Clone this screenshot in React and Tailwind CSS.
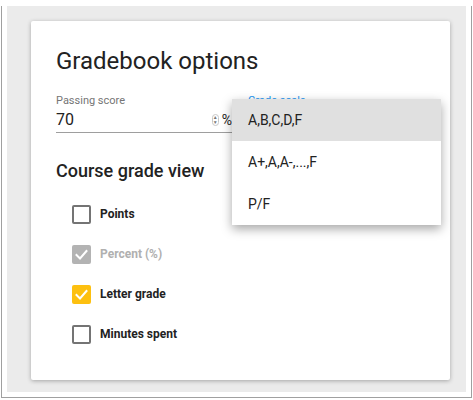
import { useState } from "react"

const font = { fontFamily: "Roboto, 'Liberation Sans', sans-serif" }

const Check = () => (
	<svg viewBox="0 0 19 19" className="w-[19px] h-[19px]">
		<polyline
			points="4.5,10 8,13.5 14.5,6"
			fill="none"
			stroke="white"
			strokeWidth="2"
			strokeLinecap="square"
		/>
	</svg>
)

const Option = ({ label, state }) => {
	let box = "border-2 border-[#747474] bg-white"
	if (state === "disabled") box = "bg-[#b3b3b3]"
	if (state === "checked") box = "bg-[#fdc010]"
	return (
		<div className="flex items-center h-[40px] gap-[9px]">
			<div className={`w-[19px] h-[19px] rounded-[2px] ${box}`}>
				{state !== "off" && <Check />}
			</div>
			<span
				className={`text-[12px] font-bold ${
					state === "disabled" ? "text-[#b0b0b0]" : "text-[#222]"
				}`}
			>
				{label}
			</span>
		</div>
	)
}

const App = () => {
	const [score] = useState("70")
	const scales = ["A,B,C,D,F", "A+,A,A-,...,F", "P/F"]

	return (
		<div className="w-[473px] h-[400px] bg-white pt-[6px] pl-[1px] pr-[1px]" style={font}>
			<div className="h-[392px] border-l border-r border-b border-[#a0a0a0] px-[5px] pb-[5px]">
				<div className="h-[386px] bg-[#ebebeb] pt-[15px] pl-[24px]">
					<div className="relative w-[419px] h-[359px] bg-white rounded-[2px] shadow-[0_1px_4px_rgba(0,0,0,0.3)] pt-[26px] px-[25px]">
						<h1 className="text-[24px] leading-[28px] text-[#222]">Gradebook options</h1>

						<div className="flex gap-[16px] mt-[19px]">
							<div className="w-[176px]">
								<div className="text-[11px] leading-[13px] text-[#757575]">Passing score</div>
								<div className="flex items-center h-[20px] mt-[3px] mb-[2px]">
									<span className="flex-1 text-[16px] text-[#222]">{score}</span>
									<span className="flex flex-col items-center justify-center w-[7px] h-[12px] border border-[#c8c8c8] rounded-full mr-[3px]">
										<span className="text-[5px] leading-[5px] text-[#777]">▲</span>
										<span className="text-[5px] leading-[5px] text-[#777]">▼</span>
									</span>
									<span className="text-[14px] text-[#222]">%</span>
								</div>
								<div className="border-b border-[#9e9e9e]" />
							</div>
							<div>
								<div className="text-[11px] leading-[13px] text-[#2196f3]">Grade scale</div>
							</div>
						</div>

						<h2 className="text-[18px] leading-[24px] font-medium text-[#222] mt-[26px]">
							Course grade view
						</h2>
						<div className="mt-[11px] pl-[16px]">
							<Option label="Points" state="off" />
							<Option label="Percent (%)" state="disabled" />
							<Option label="Letter grade" state="checked" />
							<Option label="Minutes spent" state="off" />
						</div>

						<div className="absolute left-[201px] top-[78px] w-[209px] bg-white shadow-[0_4px_10px_rgba(0,0,0,0.35)]">
							{scales.map((s, i) => (
								<div
									key={s}
									className={`h-[42px] flex items-center pl-[16px] text-[14px] text-[#222] ${
										i === 0 ? "bg-[#e0e0e0]" : ""
									}`}
								>
									{s}
								</div>
							))}
						</div>
					</div>
				</div>
			</div>
		</div>
	)
}

export default App
